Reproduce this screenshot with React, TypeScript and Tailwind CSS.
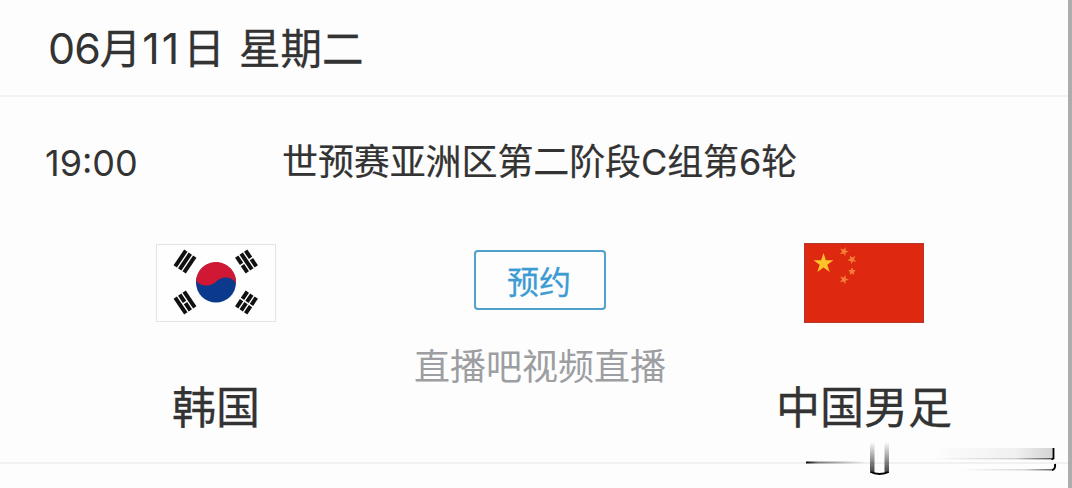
import type { ReactNode } from "react";

const star = "0,-1 0.225,-0.309 0.951,-0.309 0.363,0.118 0.588,0.809 0,0.382 -0.588,0.809 -0.363,0.118 -0.951,-0.309 -0.225,-0.309";

const trigrams = [
  { x: 29, y: 17.5, angle: -56, broken: [false, false, false] },
  { x: 90.5, y: 17.5, angle: 56, broken: [true, false, true] },
  { x: 29, y: 58.5, angle: 56, broken: [false, true, false] },
  { x: 90.5, y: 58.5, angle: -56, broken: [true, true, true] },
];

const smallStars = [
  { x: 40, y: 8.5, angle: 20 },
  { x: 48, y: 16.5, angle: 45 },
  { x: 48, y: 28.5, angle: 0 },
  { x: 40, y: 36.5, angle: 20 },
];

function KoreaFlag() {
  return (
    <svg width="120" height="78" viewBox="0 0 120 78">
      <rect x="0.5" y="0.5" width="119" height="77" fill="#fefefe" stroke="#e4e4e6" />
      <circle cx="60" cy="38.5" r="20" fill="#0b3a8c" />
      <path
        d="M40.1 36.5 A20 20 0 1 1 80 39.5 C78 34.5 70 31.5 64 35 C60 37 57 41.5 51 41.5 C46 41.5 42 39.5 40.1 36.5 Z"
        fill="#d01733"
      />
      {trigrams.map((t, i) => (
        <g key={i} transform={`translate(${t.x} ${t.y}) rotate(${t.angle})`} stroke="#111" strokeWidth="4">
          {t.broken.map((broken, row) => (
            <path
              key={row}
              d={broken ? `M-9.5 ${(row - 1) * 5.4}H-0.8M0.8 ${(row - 1) * 5.4}H9.5` : `M-9.5 ${(row - 1) * 5.4}H9.5`}
            />
          ))}
        </g>
      ))}
    </svg>
  );
}

function ChinaFlag() {
  return (
    <svg width="120" height="80" viewBox="0 0 120 80">
      <rect width="120" height="80" fill="#de2910" />
      <rect x="0.5" y="0.5" width="119" height="79" fill="none" stroke="#b5382c" />
      <polygon points={star} transform="translate(19.5 20.5) scale(10.5)" fill="#fcc32a" />
      {smallStars.map((s, i) => (
        <polygon
          key={i}
          points={star}
          transform={`translate(${s.x} ${s.y}) rotate(${s.angle}) scale(3.3)`}
          fill="#f6803a"
          stroke="#f6803a"
          strokeWidth="0.3"
        />
      ))}
    </svg>
  );
}

function Smudge() {
  return (
    <svg className="absolute left-[800px] top-[436px]" width="260" height="44" viewBox="0 0 260 44">
      <defs>
        <linearGradient id="fadeRight">
          <stop offset="0" stopColor="#000" />
          <stop offset="0.2" stopColor="#000" stopOpacity="0.5" />
          <stop offset="1" stopColor="#000" stopOpacity="0" />
        </linearGradient>
        <linearGradient id="fadeLeft">
          <stop offset="0" stopColor="#000" stopOpacity="0" />
          <stop offset="0.7" stopColor="#000" stopOpacity="0.15" />
          <stop offset="1" stopColor="#000" stopOpacity="0.6" />
        </linearGradient>
        <linearGradient id="band">
          <stop offset="0" stopColor="#000" stopOpacity="0" />
          <stop offset="0.7" stopColor="#000" stopOpacity="0.05" />
          <stop offset="1" stopColor="#000" stopOpacity="0.17" />
        </linearGradient>
        <linearGradient id="fadeDown" x2="0" y2="1">
          <stop offset="0" stopColor="#000" stopOpacity="0" />
          <stop offset="1" stopColor="#000" stopOpacity="0.75" />
        </linearGradient>
      </defs>
      <rect x="6" y="25.5" width="60" height="2" fill="url(#fadeRight)" />
      <rect x="70" y="6" width="4.5" height="31" fill="url(#fadeDown)" />
      <rect x="84.5" y="6" width="4.5" height="31" fill="url(#fadeDown)" />
      <path d="M71 36C75 38.5 84 38.5 88.5 36" fill="none" stroke="#000" strokeWidth="2" />
      <rect x="130" y="12" width="123" height="11" fill="url(#band)" />
      <rect x="130" y="22" width="123" height="1.5" fill="url(#fadeLeft)" />
      <rect x="160" y="33" width="92" height="1.5" fill="url(#fadeLeft)" />
      <path d="M253.5 12V22.5L251.5 23.5" fill="none" stroke="#000" strokeWidth="1.8" />
      <path d="M255 28C255.5 31 254.5 34 252 34" fill="none" stroke="#000" strokeWidth="2" />
    </svg>
  );
}

function Num({ children, className = "" }: { children: ReactNode; className?: string }) {
  return <span className={`font-['Inter',sans-serif] ${className}`}>{children}</span>;
}

function Team({ flag, name }: { flag: ReactNode; name: string }) {
  return (
    <div className="flex w-[324px] flex-col items-center">
      <div className="flex h-20 items-center">{flag}</div>
      <div className="mt-[50px] text-[44px] leading-[64px] [-webkit-text-stroke:0.3px]">{name}</div>
    </div>
  );
}

export default function App() {
  return (
    <div className="relative h-[488px] w-[1072px] overflow-hidden border-r-4 border-[#adadad] bg-[#fdfdfd] font-['Noto_Sans_CJK_SC',sans-serif] text-[#333]">
      <header className="flex h-[97px] items-center border-b-2 border-[#f4f4f4] pb-0.5 pl-12 text-[41.5px] leading-none whitespace-pre">
        <Num className="pt-1 text-[43px] tracking-[-1px]">06</Num>
        <span className="[-webkit-text-stroke:0.3px]">月</span>
        <Num className="ml-px pt-1 text-[43px] tracking-[2px]">11</Num>
        <span className="ml-0.5 [word-spacing:5px] [-webkit-text-stroke:0.3px]">日 星期二</span>
      </header>

      <section className="h-[367px] border-b-2 border-[#f1f1f1]">
        <div className="flex h-[146px] items-center pb-[19px] text-[36px] leading-none">
          <div className="w-[282px] pl-[45px] pt-0.5">
            <Num>19:00</Num>
          </div>
          <div className="whitespace-nowrap tracking-[-0.1px] [-webkit-text-stroke:0.2px]">
            世预赛亚洲区第二阶段<Num>C</Num>组第<Num>6</Num>轮
          </div>
        </div>

        <div className="flex pl-[54px]">
          <Team flag={<KoreaFlag />} name="韩国" />
          <div className="flex w-[324px] flex-col items-center pt-[7px]">
            <button className="h-[60px] w-[132px] rounded-[4px] border-2 border-[#519fcb] pr-0.5 text-[32px] leading-none text-[#3d9bd3] [-webkit-text-stroke:0.3px]">
              预约
            </button>
            <div className="mt-[30px] text-[36px] leading-[48px] text-[#9c9ea2]">直播吧视频直播</div>
          </div>
          <Team flag={<ChinaFlag />} name="中国男足" />
        </div>
      </section>
      <Smudge />
    </div>
  );
}
